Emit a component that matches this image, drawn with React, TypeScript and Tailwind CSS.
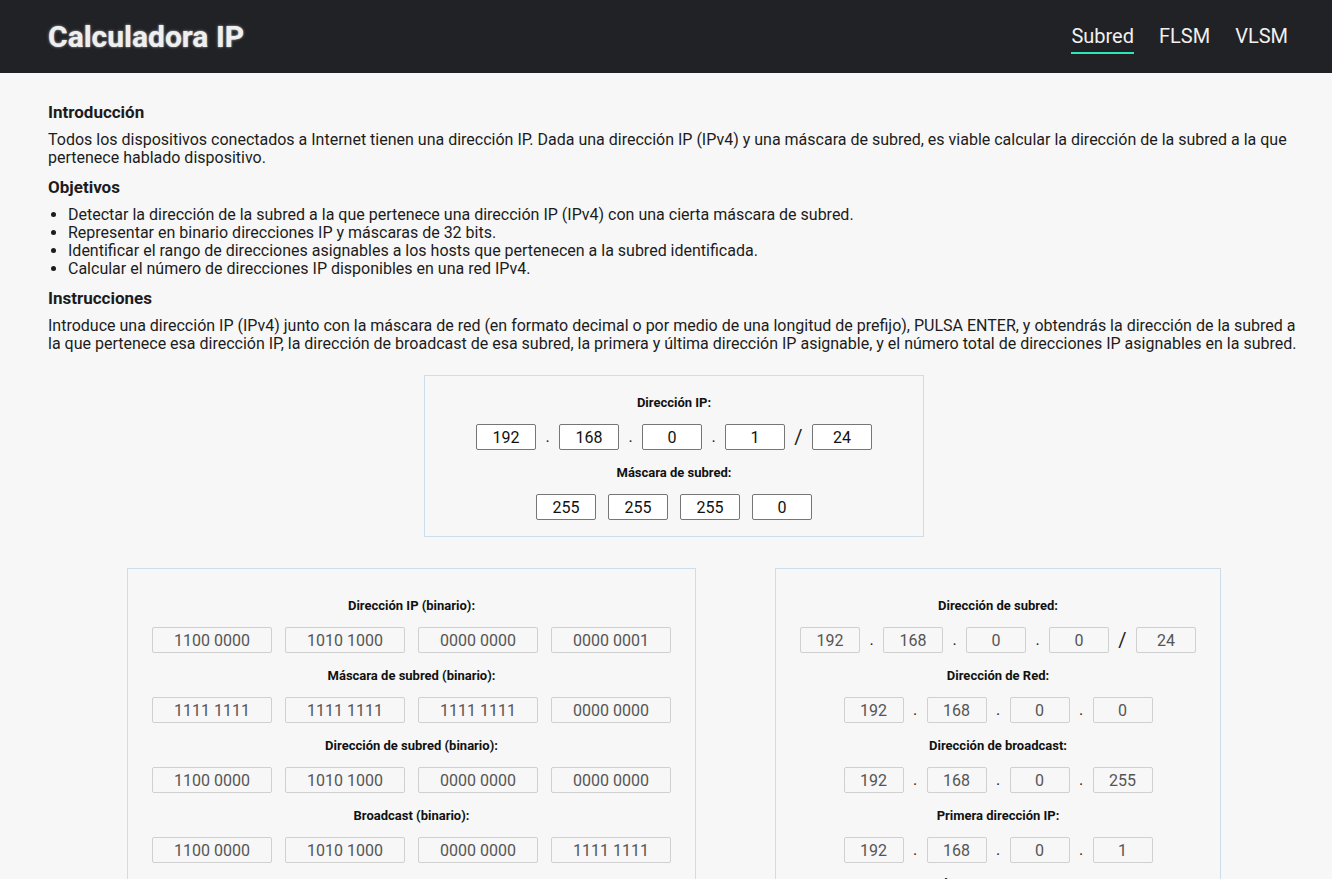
import { Fragment } from "react";

const binRows = [
  { label: "Dirección IP (binario):", values: ["1100 0000", "1010 1000", "0000 0000", "0000 0001"] },
  { label: "Máscara de subred (binario):", values: ["1111 1111", "1111 1111", "1111 1111", "0000 0000"] },
  { label: "Dirección de subred (binario):", values: ["1100 0000", "1010 1000", "0000 0000", "0000 0000"] },
  { label: "Broadcast (binario):", values: ["1100 0000", "1010 1000", "0000 0000", "1111 1111"] },
];

const resultRows = [
  { label: "Dirección de Red:", values: ["192", "168", "0", "0"] },
  { label: "Dirección de broadcast:", values: ["192", "168", "0", "255"] },
  { label: "Primera dirección IP:", values: ["192", "168", "0", "1"] },
  { label: "Última dirección IP:", values: ["192", "168", "0", "254"] },
];

function Field({ value, readOnly = false, wide = false }: { value: string; readOnly?: boolean; wide?: boolean }) {
  return (
    <input
      readOnly
      value={value}
      className={`h-[26px] ${wide ? "w-[120px]" : "w-[60px]"} rounded-[2px] border text-center text-base outline-none ${
        readOnly ? "border-[#d0d0d0] bg-[#f7f7f7] text-[#555]" : "border-[#767676] bg-white text-[#111]"
      }`}
    />
  );
}

function Label({ children }: { children: string }) {
  return <p className="mb-[14px] text-center text-[13px] leading-[15px] font-bold text-[#111]">{children}</p>;
}

function Dot() {
  return <span className="w-[23px] text-center text-base leading-[26px] text-[#222]">.</span>;
}

function IpRow({ values, prefix, readOnly }: { values: string[]; prefix?: string; readOnly?: boolean }) {
  return (
    <div className="flex items-center justify-center">
      {values.map((v, i) => (
        <Fragment key={i}>
          {i > 0 && <Dot />}
          <Field value={v} readOnly={readOnly} />
        </Fragment>
      ))}
      {prefix && (
        <>
          <span className="w-[27px] text-center text-xl leading-[26px] text-[#222]">/</span>
          <Field value={prefix} readOnly={readOnly} />
        </>
      )}
    </div>
  );
}

export default function App() {
  return (
    <div className="min-h-screen bg-[#f7f7f7] font-['Roboto',sans-serif] text-[#1c1c1c]">
      <header className="flex h-[73px] items-center justify-between bg-[#212226] pl-12 pr-[44px]">
        <h1 className="text-[30px] font-bold text-[#efefef] [text-shadow:0_0_3px_#9a9a9a,0_0_1px_#aaa]">Calculadora IP</h1>
        <nav className="flex gap-[25px] pt-[2px] text-xl text-[#f0f0f0]">
          <a className="border-b-2 border-[#2fe6b9] pb-[2px]">Subred</a>
          <a className="pb-[4px]">FLSM</a>
          <a className="pb-[4px]">VLSM</a>
        </nav>
      </header>

      <main className="ml-12 w-[1252px] pt-[30px] pb-10 text-base leading-[18px]">
        <h3 className="mb-[10px] text-[17px] font-bold">Introducción</h3>
        <p>
          Todos los dispositivos conectados a Internet tienen una dirección IP. Dada una dirección IP (IPv4) y una máscara de
          subred, es viable calcular la dirección de la subred a la que pertenece hablado dispositivo.
        </p>

        <h3 className="mt-[11px] mb-[10px] text-[17px] font-bold">Objetivos</h3>
        <ul className="list-disc pl-5">
          <li>Detectar la dirección de la subred a la que pertenece una dirección IP (IPv4) con una cierta máscara de subred.</li>
          <li>Representar en binario direcciones IP y máscaras de 32 bits.</li>
          <li>Identificar el rango de direcciones asignables a los hosts que pertenecen a la subred identificada.</li>
          <li>Calcular el número de direcciones IP disponibles en una red IPv4.</li>
        </ul>

        <h3 className="mt-[11px] mb-[10px] text-[17px] font-bold">Instrucciones</h3>
        <p>
          Introduce una dirección IP (IPv4) junto con la máscara de red (en formato decimal o por medio de una longitud de
          prefijo), PULSA ENTER, y obtendrás la dirección de la subred a la que pertenece esa dirección IP, la dirección de
          broadcast de esa subred, la primera y última dirección IP asignable, y el número total de direcciones IP asignables
          en la subred.
        </p>

        {/* input card */}
        <section className="mx-auto mt-[22px] w-[500px] border border-[#cddde9] pt-[19px] pb-[16px]">
          <Label>Dirección IP:</Label>
          <IpRow values={["192", "168", "0", "1"]} prefix="24" />
          <div className="h-[15px]" />
          <Label>Máscara de subred:</Label>
          <div className="flex justify-center gap-[12px]">
            {["255", "255", "255", "0"].map((v, i) => (
              <Field key={i} value={v} />
            ))}
          </div>
        </section>

        <div className="mt-[31px] flex items-start justify-evenly">
          <section className="border border-[#cddde9] px-[24px] pt-[29px] pb-[6px]">
            {binRows.map((r) => (
              <div key={r.label} className="mb-[15px]">
                <Label>{r.label}</Label>
                <div className="flex gap-[13px]">
                  {r.values.map((v, i) => (
                    <Field key={i} value={v} readOnly wide />
                  ))}
                </div>
              </div>
            ))}
          </section>

          <section className="border border-[#cddde9] px-[24px] pt-[29px] pb-[6px]">
            <div className="mb-[15px]">
              <Label>Dirección de subred:</Label>
              <IpRow values={["192", "168", "0", "0"]} prefix="24" readOnly />
            </div>
            {resultRows.map((r) => (
              <div key={r.label} className="mb-[15px]">
                <Label>{r.label}</Label>
                <IpRow values={r.values} readOnly />
              </div>
            ))}
            <div className="mb-[15px]">
              <Label>Número de direcciones IP asignables:</Label>
              <div className="flex justify-center">
                <Field value="254" readOnly />
              </div>
            </div>
          </section>
        </div>
      </main>
    </div>
  );
}
